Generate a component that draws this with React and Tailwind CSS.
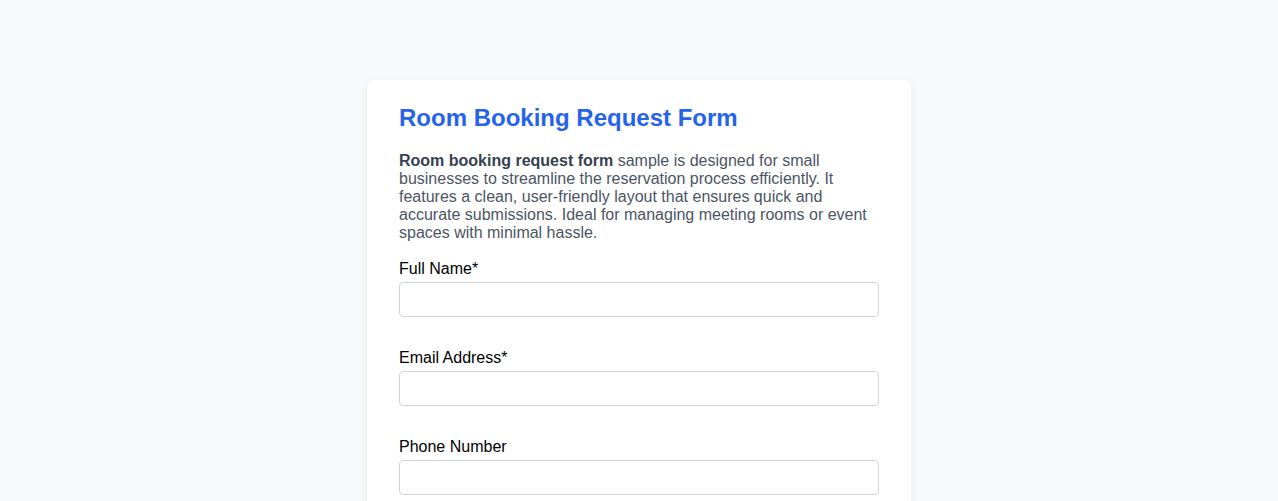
import React from 'react';

const fields = [
  { id: 'fullName', label: 'Full Name*', type: 'text' },
  { id: 'email', label: 'Email Address*', type: 'email' },
  { id: 'phone', label: 'Phone Number', type: 'tel' },
];

const App = () => {
  return (
    <div className="min-h-screen bg-[#f8f9fa] pt-20 font-['Liberation_Sans',Arial,sans-serif]">
      <div className="mx-auto w-[544px] rounded-lg bg-white px-8 pt-6 pb-8 shadow-[0_2px_10px_rgba(0,0,0,0.06)]">
        {/* Heading */}
        <h1 className="mb-5 text-[24px] font-bold leading-[normal] text-[#2563eb]">
          Room Booking Request Form
        </h1>

        <p className="mb-[18px] text-base leading-[normal] text-[#4b5563]">
          <strong className="font-bold text-[#374151]">Room booking request form</strong> sample is designed
          for small businesses to streamline the reservation process efficiently. It features a clean,
          user-friendly layout that ensures quick and accurate submissions. Ideal for managing meeting
          rooms or event spaces with minimal hassle.
        </p>

        {/* Fields */}
        <form className="flex flex-col gap-8">
          {fields.map((f) => (
            <div key={f.id} className="flex flex-col">
              <label htmlFor={f.id} className="mb-1 text-base leading-[normal] text-black">
                {f.label}
              </label>
              <input
                id={f.id}
                type={f.type}
                className="h-[35px] w-full rounded border border-[#d1d5db] bg-white px-3 text-base outline-none"
              />
            </div>
          ))}
        </form>
      </div>
    </div>
  );
};

export default App;
